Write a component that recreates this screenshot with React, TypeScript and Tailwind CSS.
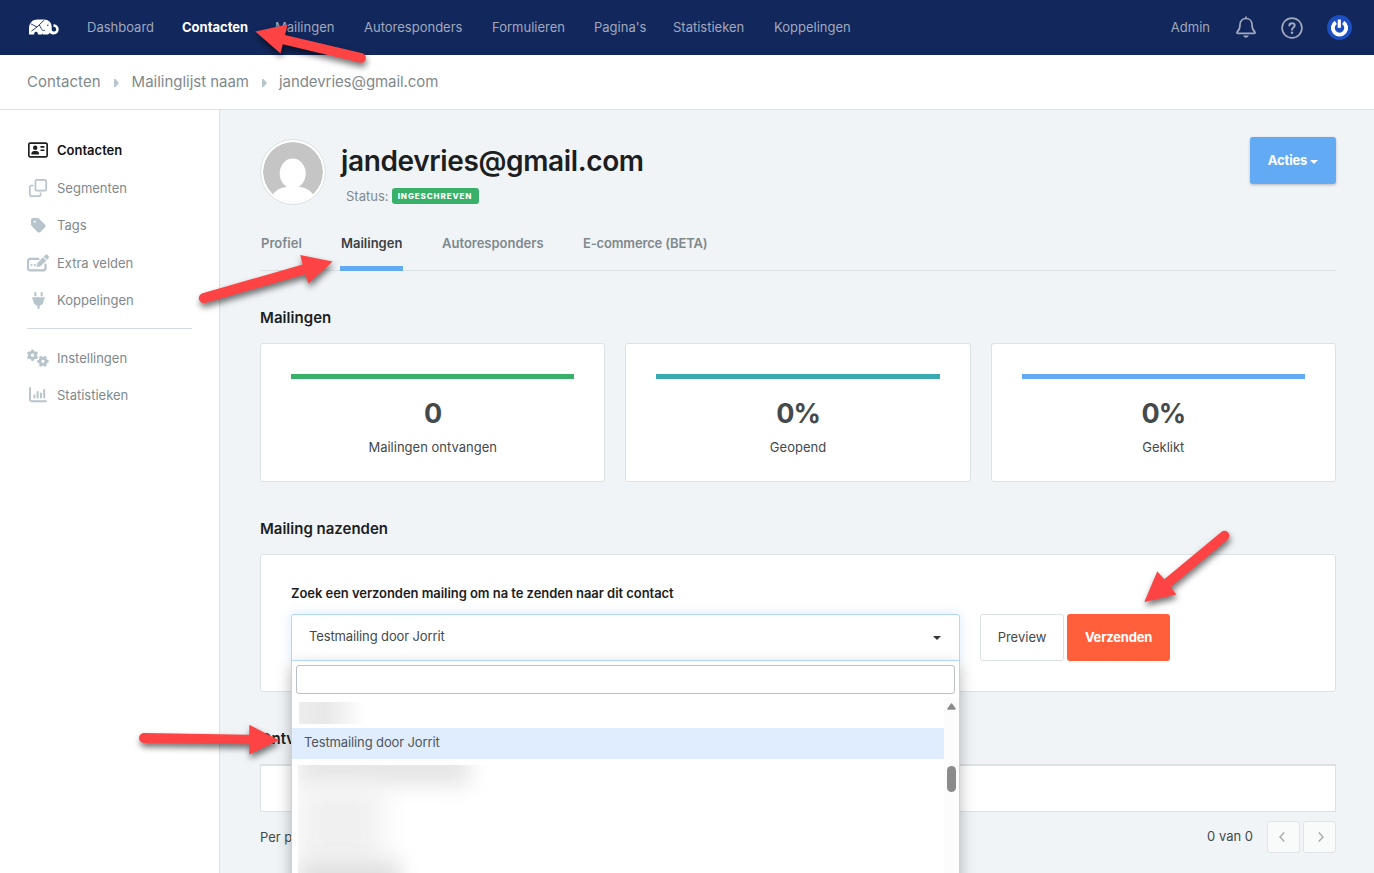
import type { ReactNode } from "react";
import { FaGears, FaPlug, FaRegAddressCard, FaRegClone, FaTag } from "react-icons/fa6";

const NAV_ITEMS = [
  { label: "Dashboard", width: "w-[95px]" },
  { label: "Contacten", width: "w-[93px]", active: true },
  { label: "Mailingen", width: "w-[89px]" },
  { label: "Autoresponders", width: "w-[128px]" },
  { label: "Formulieren", width: "w-[102px]" },
  { label: "Pagina's", width: "w-[79px]" },
  { label: "Statistieken", width: "w-[101px]" },
  { label: "Koppelingen", width: "w-[90px]" },
];

const STATS = [
  { value: "0", label: "Mailingen ontvangen", bar: "bg-[#38b06a]" },
  { value: "0%", label: "Geopend", bar: "bg-[#38aab0]" },
  { value: "0%", label: "Geklikt", bar: "bg-[#63aaf5]" },
];

const TABS = [
  { label: "Profiel", width: "w-[80px]" },
  { label: "Mailingen", width: "w-[101px]", active: true },
  { label: "Autoresponders", width: "w-[141px]" },
  { label: "E-commerce (BETA)", width: "w-[130px] tracking-[-0.15px]" },
];

function Logo() {
  return (
    <svg width="31" height="17" viewBox="0 0 31 17" fill="none">
      <path
        d="M0 15.500V9.500C0 4 3.500.6 8.500.6H15c4.500 0 7.500 3 7.700 7v3c0 1.200.8 2 2 2 1.500 0 2.500-.9 2.500-2.400s-1-2.400-2.700-2.400V5.300c3 0 5.200 2.200 5.200 5 0 3.100-2.200 5.200-5 5.200-1.700 0-3.200-.6-4.200-1.800-.3 1.200-1 1.800-2.200 1.800H15c-1.200 0-1.800-.5-2-1.500v1.500H9c0-1.800-.8-2.800-2-2.800s-1.800 1-1.800 2.800z"
        fill="#fff"
      />
      <path d="M1.800 4.800L8 8l7.300-7M8 8l-5.500 4M10.300 6l2 3.500c.3 1.500 2 2.500 3.500 1.800" stroke="#12275b" strokeWidth=".9" />
      <circle cx="18.800" cy="6.300" r=".7" fill="#12275b" />
    </svg>
  );
}

function BellIcon() {
  return (
    <svg width="20" height="23" viewBox="0 0 20 23" fill="none" stroke="#a0a9be" strokeWidth="1.700">
      <path d="M10 1v1.500M10 2.500c-3.600 0-6 2.600-6 6.200 0 4.300-1.300 5.800-2.600 7-.8.8-.5 1.700.6 1.700h16c1.100 0 1.400-.9.600-1.700-1.300-1.200-2.600-2.700-2.600-7 0-3.600-2.400-6.200-6-6.200z" strokeLinecap="round" />
      <path d="M7.300 19.500h5.400c-.3 1.300-1.300 2.200-2.700 2.200s-2.400-.9-2.700-2.200z" fill="#a0a9be" stroke="none" />
    </svg>
  );
}

function HelpIcon() {
  return (
    <svg width="22" height="22" viewBox="0 0 22 22" fill="none" stroke="#a0a9be" strokeWidth="1.700">
      <circle cx="11" cy="11" r="9.900" />
      <path d="M8.300 8.600c.1-1.500 1.200-2.400 2.700-2.400 1.600 0 2.700.9 2.700 2.300 0 2-2.700 2.100-2.700 4.300" strokeWidth="1.900" strokeLinecap="round" />
      <circle cx="11" cy="15.700" r="1.300" fill="#a0a9be" stroke="none" />
    </svg>
  );
}

function PowerAvatar() {
  return (
    <svg width="25" height="25" viewBox="0 0 25 25" fill="none">
      <circle cx="12.500" cy="12.500" r="12.500" fill="#1d4fc0" />
      <path d="M8.800 7.300a6.700 6.700 0 1 0 7.400 0" stroke="#fff" strokeWidth="3.900" />
      <path d="M12.300 4.500v8.300" stroke="#fff" strokeWidth="3.200" />
    </svg>
  );
}

function FieldIcon() {
  return (
    <svg width="22" height="18" viewBox="0 0 22 18" fill="none">
      <path d="M11.500 4.900H3A2 2 0 0 0 1 6.900v7.400a2 2 0 0 0 2 2h13.500a2 2 0 0 0 2-2V10.500" stroke="#b8c4cc" strokeWidth="2.200" strokeLinecap="round" />
      <path d="M9.800 12.900l.8-4L16 3.400l3.100 3.100-5.500 5.500zM16.900 2.600l1.400-1.400a1.600 1.600 0 0 1 2.300 0l.7.7a1.600 1.600 0 0 1 0 2.300l-1.400 1.400z" fill="#b8c4cc" stroke="#b8c4cc" strokeWidth=".4" />
      <circle cx="4.600" cy="11" r="1.100" fill="#b8c4cc" />
      <circle cx="7.900" cy="11" r="1.100" fill="#b8c4cc" />
    </svg>
  );
}

function StatsIcon() {
  return (
    <svg width="18" height="16" viewBox="0 0 18 16" fill="none" stroke="#b8c4cc" strokeLinecap="round">
      <path d="M1 1v11.500A1.500 1.500 0 0 0 2.500 14.200H17" strokeWidth="1.900" />
      <path d="M5.400 8.500v2M8.600 5v5.500M11.900 6.500v4M15.200 3v7.500" strokeWidth="2" />
    </svg>
  );
}

function SideItem({ icon, label, active }: { icon: ReactNode; label: string; active?: boolean }) {
  return (
    <a className={`flex h-[37.500px] items-center ${active ? "font-semibold text-[#121415]" : "text-[#7f898d]"}`}>
      <span className={`flex w-[22px] shrink-0 justify-center ${active ? "text-[#1c1e1f]" : "text-[#b8c4cc]"}`}>{icon}</span>
      <span className="ml-2">{label}</span>
    </a>
  );
}

function Caret({ className }: { className: string }) {
  return <span className={`inline-block border-x-4 border-t-4 border-x-transparent ${className}`} />;
}

function Crumb() {
  return (
    <svg width="5" height="8" viewBox="0 0 5 8" className="mt-px">
      <path d="M0 0h1.500L5 4 1.500 8H0z" fill="#b8c7cf" />
    </svg>
  );
}

function Dropdown() {
  return (
    <div className="absolute -left-px top-[45px] z-10 h-[230px] w-[669px] border border-[#b3d7fb] bg-white px-1 pt-1 shadow-[0_6px_14px_rgba(0,0,0,0.28)]">
      <div className="h-[29px] rounded-[3px] border border-[#b9bfc2]" />
      <div className="-mx-1 mt-1 flex">
        <div className="flex-1">
          <div className="h-[30px] pl-[7px] pt-1">
            <div className="h-[22px] w-[66px] bg-linear-to-r from-[#ededed] via-[#e8e8e8] via-40% to-white" />
          </div>
          <div className="flex h-[31px] items-center bg-[#e0edff] pb-[3px] pl-3 tracking-[-0.120px] text-[#4c5559]">
            Testmailing door Jorrit
          </div>
          <div className="ml-1.5 mt-1.5 h-[120px] w-[200px] overflow-hidden">
            <div className="-mt-3 h-8 w-[172px] bg-[#e5e5e5] blur-[10px]" />
            <div className="h-20 w-[84px] bg-[#f0f0f0] blur-[14px]" />
            <div className="-mt-1 h-10 w-[102px] bg-[#dfdfdf] blur-[10px]" />
          </div>
        </div>
        <div className="flex h-[180px] w-[15px] flex-col items-center bg-[#fcfcfc] pt-[5px]">
          <svg width="9" height="7" viewBox="0 0 9 7">
            <path d="M4.500 1L8 6H1z" fill="#8b8b8b" stroke="#8b8b8b" strokeWidth="1.500" strokeLinejoin="round" />
          </svg>
          <div className="mt-14 h-[26px] w-[9px] rounded-full bg-[#8b8b8b]" />
        </div>
      </div>
    </div>
  );
}

function Arrows() {
  return (
    <svg
      width="1374"
      height="873"
      className="pointer-events-none absolute left-0 top-0 z-20 drop-shadow-[1px_4px_3px_rgba(0,0,0,0.550)]"
      fill="#fd4343"
    >
      <path d="M255.300 31.500L287.500 24.500 285 35 362.500 53.300A4.900 4.900 0 0 1 360.300 62.800L282.800 44.300 280.500 53.500z" />
      <path d="M332.600 261.500L300.200 255 302.600 264.500 202.500 293.300A4.900 4.900 0 0 0 205.300 303L305.300 274.300 308.500 283.500z" />
      <path d="M1144.300 602L1157.300 571.300 1164.300 579.300 1221.300 532A4.900 4.900 0 0 1 1227.800 539.400L1170.700 587 1176.300 594.500z" />
      <path d="M279 740.300L249.300 724.700 249.300 734.700 144 733A5 5 0 0 0 144 743L249.300 744.300 249.300 754.500z" />
    </svg>
  );
}

export default function App() {
  return (
    <div className="relative h-[873px] w-[1374px] overflow-hidden bg-[#f0f4f7] font-['Inter','Liberation_Sans',sans-serif] text-[13px] leading-5 text-[#44494b]">
      <header className="flex h-[55px] items-center bg-[#12275b] text-[#a0a9be]">
        <div className="ml-[29px] w-[58px]">
          <Logo />
        </div>
        <nav className="flex pb-0.5">
          {NAV_ITEMS.map((item) => (
            <a key={item.label} className={`${item.width} ${item.active ? "font-bold text-white" : ""}`}>
              {item.label}
            </a>
          ))}
        </nav>
        <div className="ml-auto mr-[22px] flex items-center">
          <span className="mr-[26px] pb-0.5">Admin</span>
          <BellIcon />
          <span className="ml-[25px] mr-6">
            <HelpIcon />
          </span>
          <PowerAvatar />
        </div>
      </header>

      <div className="flex h-[55px] items-center gap-[13px] border-b border-[#dce1e4] bg-white pl-[27px] text-[15px] text-[#7f898d]">
        <span className="tracking-[0.050px]">Contacten</span>
        <Crumb />
        <span className="tracking-[-0.020px]">Mailinglijst naam</span>
        <Crumb />
        <span className="-ml-px tracking-[-0.070px]">jandevries@gmail.com</span>
      </div>

      <div className="flex h-[763px]">
        <aside className="w-[220px] shrink-0 border-r border-[#dce1e4] bg-white pl-[27px] pr-[27px] pt-[21.500px]">
          <SideItem icon={<FaRegAddressCard size={20} />} label="Contacten" active />
          <SideItem icon={<FaRegClone size={18} />} label="Segmenten" />
          <SideItem icon={<FaTag size={17} />} label="Tags" />
          <SideItem icon={<FieldIcon />} label="Extra velden" />
          <SideItem icon={<FaPlug size={17} />} label="Koppelingen" />
          <hr className="mb-[10.500px] mt-[8.500px] border-[#d3dbdf]" />
          <SideItem icon={<FaGears size={22} />} label="Instellingen" />
          <SideItem icon={<StatsIcon />} label="Statistieken" />
        </aside>

        <main className="w-[1116px] pl-10">
          <div className="flex h-[107px] pt-[27px]">
            <div className="mt-0.5 size-[66px] shrink-0 rounded-full border border-[#dce1e4] bg-white p-0.5">
              <svg viewBox="0 0 60 60" className="size-full rounded-full">
                <circle cx="30" cy="30" r="30" fill="#c5c5c5" />
                <ellipse cx="29.700" cy="31.500" rx="13" ry="15" fill="#fff" />
                <path d="M9.500 53C13 47.500 19 45.500 25 44.600V40h10v4.600C41 45.500 47 47.500 50.500 53L45 60H15z" fill="#fff" />
              </svg>
            </div>
            <div className="ml-[15px]">
              <h1 className="mt-1 text-[28px] font-semibold leading-10 tracking-[-0.370px] text-[#1c1e1f]">jandevries@gmail.com</h1>
              <div className="ml-[5px] mt-[5px] flex items-center text-[#7f898d]">
                Status:
                <span className="ml-[3px] flex h-4 w-[87px] items-center justify-center rounded-[3px] bg-[#38b06a] text-[8px] font-extrabold tracking-[0.900px] text-white">
                  INGESCHREVEN
                </span>
              </div>
            </div>
            <button className="ml-auto flex h-[47px] w-[86px] items-center justify-center gap-[3px] rounded-[3px] bg-[#63aaf5] font-bold tracking-[-0.150px] text-white shadow-[0_1px_3px_rgba(0,0,0,0.250)]">
              <span className="pb-px">Acties</span>
              <Caret className="mt-0.5 border-t-white" />
            </button>
          </div>

          <div className="flex h-[54px] border-b border-[#dce1e4] pt-4 font-semibold text-[#7f898d]">
            {TABS.map((tab) => (
              <div key={tab.label} className={`h-[38px] pl-px ${tab.width}`}>
                <span className={tab.active ? "block h-full w-[63px] -ml-px border-b-5 border-[#63aaf5] pl-px text-[#3c4143]" : "whitespace-nowrap"}>
                  {tab.label}
                </span>
              </div>
            ))}
          </div>

          <h2 className="mt-[37px] text-[15px] font-semibold tracking-[0.050px] text-[#1c1e1f]">Mailingen</h2>
          <div className="mt-[15px] grid grid-cols-3 gap-5">
            {STATS.map((stat) => (
              <div key={stat.label} className="h-[139px] rounded-[3px] border border-[#dce1e4] bg-white p-[30px] text-center">
                <div className={`h-[5px] ${stat.bar}`} />
                <div className="mt-[15px] text-[27px] font-bold leading-10 tracking-[-1px]">{stat.value}</div>
                <div className="mt-[3px]">{stat.label}</div>
              </div>
            ))}
          </div>

          <h2 className="mt-[37px] text-[15px] font-semibold text-[#1c1e1f]">Mailing nazenden</h2>
          <section className="mt-[15px] h-[138px] rounded-[3px] border border-[#dce1e4] bg-white px-[30px] pt-7">
            <label className="block font-semibold tracking-[-0.050px] text-[#1c1e1f]">Zoek een verzonden mailing om na te zenden naar dit contact</label>
            <div className="mt-[11px] flex">
              <div className="relative flex h-[47px] w-[669px] items-center justify-between rounded-t-[3px] border border-[#b3d7fb] bg-white pl-[17px] pr-[18px] shadow-[0_0_12px_rgba(99,170,245,0.250)]">
                <span className="mb-[3px] tracking-[-0.120px]">Testmailing door Jorrit</span>
                <Caret className="mt-px border-t-[#333]" />
                <Dropdown />
              </div>
              <button className="ml-5 h-[47px] w-[84px] rounded-[3px] border border-[#dce1e4] pb-0.5">Preview</button>
              <button className="ml-[3px] h-[47px] w-[103px] rounded-[3px] bg-[#ff603b] pb-0.5 font-bold tracking-[-0.200px] text-white">
                Verzenden
              </button>
            </div>
          </section>

          <h2 className="mt-[37px] text-[15px] font-semibold text-[#1c1e1f]">Ontv</h2>
          <div className="mt-[15px] h-12 border border-t-2 border-[#dce1e4] bg-white" />
          <div className="mt-[9px] flex h-8 items-center">
            <span>Per p</span>
            <span className="ml-auto mr-[14px] pb-0.5">0 van 0</span>
            <button className="mr-[3px] flex h-8 w-[33px] items-center justify-center rounded-[3px] border border-[#dfe4e6] bg-[#f9fbfb] pr-1">
              <svg width="6" height="10" viewBox="0 0 6 10" fill="none" stroke="#a9adaf" strokeWidth="1.500">
                <path d="M5.300.5L1 5l4.300 4.500" />
              </svg>
            </button>
            <button className="flex h-8 w-[33px] items-center justify-center rounded-[3px] border border-[#dfe4e6] bg-[#f9fbfb] pl-[3px]">
              <svg width="6" height="10" viewBox="0 0 6 10" fill="none" stroke="#a9adaf" strokeWidth="1.500">
                <path d="M.7.5L5 5 .7 9.500" />
              </svg>
            </button>
          </div>
        </main>
      </div>
      <Arrows />
    </div>
  );
}
